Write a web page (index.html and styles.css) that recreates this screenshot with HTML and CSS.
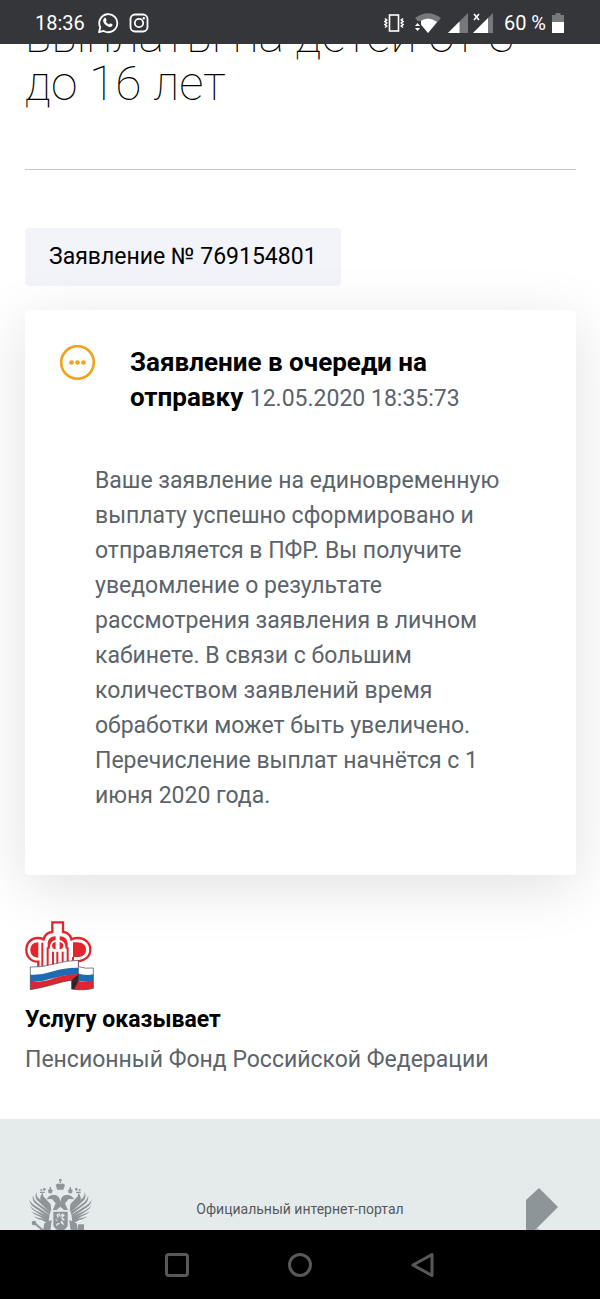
FILE: index.html
```html
<!DOCTYPE html>
<html lang="ru">
<head>
    <meta charset="utf-8">
    <meta name="viewport" content="width=device-width, initial-scale=1">
    <title>Заявление № 769154801</title>
    <link rel="stylesheet" href="styles.css">
</head>
<body>

    <header class="status-bar">
        <span class="time">18:36</span>
        <!-- whatsapp -->
        <svg class="whatsapp" width="22" height="22" viewBox="0 0 22 22">
            <path d="M2 20.200l1.300-4.900A9 9 0 1 1 6.700 18.900z" fill="none" stroke="#fff" stroke-width="1.800" stroke-linejoin="round"/>
            <path d="M7.300 6.200c.5-.5 1.300-.4 1.500.1l.8 1.900c.1.400-.6 1-.7 1.300.6 1.300 1.700 2.300 3.200 2.900.4-.2.800-1 1.200-1.100l2 1c.4.200.2 1.300-.3 1.900-.8.800-2 1-3.300.6-2.700-.9-4.600-2.700-5.500-5.200-.3-1.300.2-2.700 1.100-3.400z" fill="#fff"/>
        </svg>
        <!-- instagram -->
        <svg class="instagram" width="20" height="20" viewBox="0 0 20 20" fill="none" stroke="#fff" stroke-width="1.800">
            <rect x="1.500" y="1.500" width="17" height="17" rx="4.500"/>
            <circle cx="10" cy="10" r="4.200"/>
            <circle cx="14.800" cy="5.200" r="1.200" fill="#fff" stroke="none"/>
        </svg>
        <div class="status-right">
            <!-- vibrate -->
            <svg width="20" height="20" viewBox="0 0 20 20" fill="none" stroke="#fff" stroke-width="1.600">
                <rect x="5.500" y="2" width="9" height="16"/>
                <path d="M1 5.500l1.700 1.500L1 8.500l1.700 1.500L1 11.500 2.700 13 1 14.500M19 5.500L17.300 7 19 8.500 17.300 10l1.700 1.500-1.700 1.500 1.700 1.500"/>
            </svg>
            <!-- wifi -->
            <svg class="wifi" width="26" height="20" viewBox="0 0 26 20">
                <path d="M0 5Q13-4.500 26 5L13 20z" fill="#77787b"/>
                <path d="M4 9Q13 2 22 9L13 20z" fill="#fff"/>
                <path d="M-1 8h7v10h-7z" fill="#353639"/>
                <path d="M0 13l2.500-3L5 13zM0 15l2.500 3L5 15z" fill="#fff"/>
            </svg>
            <!-- sim 1 and sim 2 -->
            <svg class="signal" width="20" height="20" viewBox="0 0 20 20">
                <path d="M20 0v20H0z" fill="#77787b"/>
                <path d="M11.500 8.500V20H0z" fill="#fff"/>
            </svg>
            <svg class="signal-two" width="20" height="20" viewBox="0 0 20 20">
                <path d="M20 0v20H0z" fill="#77787b"/>
                <path d="M15 5v15H0z" fill="#fff"/>
                <path d="M1 1l5 6M6 1L1 7" fill="none" stroke="#fff" stroke-width="1.600"/>
            </svg>
            <span class="percent">60 %</span>
            <!-- battery -->
            <svg width="12" height="20" viewBox="0 0 12 20">
                <path d="M3.500 0h5v2H12v7H0V2h3.500z" fill="#77787b"/>
                <path d="M0 9h12v11H0z" fill="#fff"/>
            </svg>
        </div>
    </header>

    <main class="page">
        <div class="content">
            <h1>выплаты на детей от 3 до 16 лет</h1>
            <hr>
            <div class="number">Заявление № 769154801</div>

            <section class="card">
                <div class="card-head">
                    <svg class="state" width="36" height="36" viewBox="0 0 36 36">
                        <circle cx="17.500" cy="17.500" r="16.300" fill="none" stroke="#eda41c" stroke-width="2.600"/>
                        <g fill="#eda41c">
                            <circle cx="11.500" cy="17.500" r="2.300"/>
                            <circle cx="17.500" cy="17.500" r="2.300"/>
                            <circle cx="23.500" cy="17.500" r="2.300"/>
                        </g>
                    </svg>
                    <h2>Заявление в очереди на отправку <time>12.05.2020 18:35:73</time></h2>
                </div>
                <p class="message">Ваше заявление на единовременную выплату успешно сформировано и отправляется в ПФР. Вы получите уведомление о результате рассмотрения заявления в личном кабинете. В связи с большим количеством заявлений время обработки может быть увеличено. Перечисление выплат начнётся с 1 июня 2020 года.</p>
            </section>

            <section class="provider">
                <!-- pension fund logo -->
                <svg class="logo" width="72" height="72" viewBox="30 30 216 216">
                    <path d="M70 178V155C48 155 34 141 34 120S48 84 68 84Q78 84 86 88C90 74 100 67 112 66V37H144V66C156 67 166 75 169 88Q178 84 188 84C210 84 226 99 226 119S210 152 188 154V178" fill="#fff" stroke="#e3262e" stroke-width="7"/>
                    <g fill="#e3262e">
                        <path d="M70 97V143C55 143 46 134 46 120S55 97 70 97z"/>
                        <path d="M174 97H188C203 97 213 106 213 119S203 141 188 141H174z"/>
                        <path d="M122 79C107 79 98 88 98 102V116H104Q104 94 122 89zM134 79C149 79 158 88 158 102V116H152Q152 94 134 89z"/>
                        <path d="M122 96Q111 98 111 107T122 118zM134 96Q145 98 145 107T134 118z"/>
                    </g>
                    <path d="M82 98V172M98 112V170M114 125V166M127 125V164M143 125V160M158 112V158M174 141V156" stroke="#e3262e" stroke-width="6"/>
                    <path d="M188 169Q211 177 235 174V194Q210 196 188 190z" fill="#fff"/>
                    <path d="M184 189Q211 198 235 193V215Q209 218 181 211z" fill="#1d6bb3"/>
                    <path d="M179 210Q208 219 235 214V235Q206 243 170 237z" fill="#df2630"/>
                    <path d="M46 171Q79 173 117 162T190 151V174Q148 172 115 183T46 194z" fill="#fff"/>
                    <path d="M46 194Q80 196 115 184T190 173V194Q151 193 117 204T46 217z" fill="#1d6bb3"/>
                    <path d="M46 216Q81 218 117 205T190 193V211H170Q145 214 120 222T46 239z" fill="#df2630"/>
                    <path d="M190 194V213L178 237 169 238V211z" fill="#29262d"/>
                    <path d="M46 171Q79 173 117 162T190 151V210L169 211Q145 214 120 222T46 239zM191 170Q212 177 235 174V235Q206 243 170 237" fill="none" stroke="#453d45" stroke-width="2"/>
                </svg>
                <h3>Услугу оказывает</h3>
                <p>Пенсионный Фонд Российской Федерации</p>
            </section>
        </div>

        <footer class="footer">
            <!-- double-headed eagle -->
            <svg class="eagle" width="66" height="66" viewBox="39 204 198 198" fill="#8e9598">
                <path d="M132 207h8v5h-8zM134 210h4v10h-4zM122 225q6-8 14-2 8-6 14 2l-5 14h-18z"/>
                <path d="M104 231h4v6h-4zM99 240l7-4 7 4-2 10h-10zM164 231h4v6h-4zM159 240l7-4 7 4-2 10h-10z"/>
                <circle cx="79" cy="240" r="3"/><circle cx="88" cy="238" r="4"/><circle cx="184" cy="238" r="4"/><circle cx="194" cy="240" r="3"/>
                <path d="M75 245h14v4H75zM183 245h14v4h-14z"/>
                <path d="M136 275Q133 257 121 255H110Q101 257 94 268L111 267 122 280Q119 289 113 300H125L136 290 147 300H159Q153 289 150 280L161 267 178 268Q171 257 162 255H151Q139 257 136 275z"/>
                <g>
                    <path d="M65 247Q58 259 65 269L107 309 105 296 71 265Q64 260 65 247z"/>
                    <path d="M54 256Q50 269 60 280L105 315V306L67 278Q55 269 54 256z"/>
                    <path d="M43 268Q44 283 57 292L103 323V314L63 289Q47 280 43 268z"/>
                    <path d="M43 286Q49 299 63 306L102 331V320L64 302Q51 296 43 286z"/>
                    <path d="M48 304Q57 315 72 319L101 336V326L72 314Q60 312 48 304z"/>
                    <path d="M57 319Q66 329 80 330L101 341V331L79 325Q67 325 57 319z"/>
                    <path d="M83 248l2 11 22 24 2 22-33-34q-2-13 7-23z"/>
                </g>
                <g transform="matrix(-1 0 0 1 273 0)">
                    <path d="M65 247Q58 259 65 269L107 309 105 296 71 265Q64 260 65 247z"/>
                    <path d="M54 256Q50 269 60 280L105 315V306L67 278Q55 269 54 256z"/>
                    <path d="M43 268Q44 283 57 292L103 323V314L63 289Q47 280 43 268z"/>
                    <path d="M43 286Q49 299 63 306L102 331V320L64 302Q51 296 43 286z"/>
                    <path d="M48 304Q57 315 72 319L101 336V326L72 314Q60 312 48 304z"/>
                    <path d="M57 319Q66 329 80 330L101 341V331L79 325Q67 325 57 319z"/>
                    <path d="M83 248l2 11 22 24 2 22-33-34q-2-13 7-23z"/>
                </g>
                <path d="M115 305h43v42q-7 14-21 18-15-4-22-18z"/>
                <path d="M124 314l10-5 1 9 8-8 7 7-8 5 8 8-8 3 6 13-12-6-13 9 4-14-6-7 8-3z" fill="#e5ebeb"/>
                <path d="M131 313l4 8 6-4-2 11 7 3-9 3 2 8-10-4-4 5 2-12-5-4 8-2z"/>
                <path d="M88 340l22-10-4 32H84z"/>
                <path d="M185 340l-22-10 4 32h22z"/>
                <path d="M59 340L93 369" fill="none" stroke="#8e9598" stroke-width="6"/>
                <circle cx="57" cy="339" r="7"/>
                <path d="M189 343h18v22h-18z"/>
            </svg>
            <span>Официальный интернет-портал</span>
            <svg class="arrow" width="34" height="68" viewBox="0 0 34 68">
                <path d="M13 0L32 19 9 42 0 51V12z" fill="#8e9598"/>
                <path d="M11 40l21 14-19 14L0 55V51z" fill="#b5bbbd"/>
            </svg>
        </footer>
    </main>

    <nav class="nav-bar">
        <button type="button" aria-label="Недавние">
            <svg width="24" height="24" viewBox="0 0 24 24"><rect x="1.500" y="1.500" width="21" height="21" rx="2.500"/></svg>
        </button>
        <button type="button" aria-label="Домой">
            <svg width="24" height="24" viewBox="0 0 24 24"><circle cx="12" cy="12" r="10.500"/></svg>
        </button>
        <button type="button" aria-label="Назад">
            <svg width="24" height="24" viewBox="0 0 24 24"><path d="M2 12L21 1.500v21z"/></svg>
        </button>
    </nav>

</body>
</html>
```
FILE: styles.css
```css
* {
    box-sizing: border-box;
}

body {
    margin: 0;
    height: 100vh;
    display: flex;
    flex-direction: column;
    background: #fff;
    color: #000;
    font-family: Roboto, "Noto Sans", sans-serif;
    font-size: 23px;
}

h1, h2, h3, p {
    margin: 0;
}

svg {
    display: block;
    flex: none;
}

/* phone status bar */
.status-bar {
    display: flex;
    align-items: center;
    flex: none;
    height: 44px;
    padding: 2px 36px 0 35px;
    background: #353639;
    color: #fff;
    font-size: 20px;
}

.whatsapp {
    margin-left: 12px;
}

.instagram {
    margin-left: 10px;
}

.status-right {
    display: flex;
    align-items: center;
    margin-left: auto;
}

.wifi {
    margin-left: 11px;
}

.signal {
    margin-left: 7px;
}

.signal-two {
    margin-left: 5px;
}

.percent {
    margin: 0 6px 0 11px;
}

/* the page is scrolled, its top and bottom are cut off */
.page {
    flex: 1;
    min-height: 0;
    overflow: hidden;
}

.content {
    padding: 0 24px 0 25px;
}

h1 {
    margin-top: -32px;
    font-size: 48px;
    font-weight: 100;
    line-height: 48px;
}

hr {
    height: 1px;
    margin: 61px 0 58px;
    border: 0;
    background: #c8c8c8;
}

.number {
    width: fit-content;
    padding: 0 24px;
    border-radius: 4px;
    background: #f2f4fa;
    line-height: 58px;
}

.card {
    margin-top: 24px;
    padding: 35px 60px 62px 35px;
    border-radius: 4px;
    background: #fff;
    box-shadow: 0 12px 60px rgba(0, 0, 0, 0.12);
    line-height: 35px;
}

.card-head {
    display: flex;
    align-items: flex-start;
    gap: 34px;
}

h2 {
    font-size: 26px;
    font-weight: 700;
}

h2 time {
    color: #5b636b;
    font-size: 23px;
    font-weight: 400;
}

.message {
    margin: 47px 0 0 35px;
    color: #5b636b;
}

.provider {
    padding: 45px 0 39px;
}

h3 {
    margin-top: 8px;
    font-size: 23px;
    font-weight: 700;
    line-height: 40px;
}

.provider p {
    color: #5b636b;
    line-height: 40px;
}

.footer {
    display: grid;
    grid-template-columns: 1fr auto 1fr;
    align-items: start;
    padding: 59px 28px 60px;
    background: #e5ebeb;
    color: #56595b;
    font-size: 14px;
    line-height: 62px;
}

.arrow {
    justify-self: end;
    margin: 10px 12px 0 0;
}

.nav-bar {
    display: flex;
    justify-content: center;
    flex: none;
    height: 69px;
    background: #000;
}

.nav-bar button {
    display: flex;
    align-items: center;
    justify-content: center;
    width: 123px;
    padding: 0;
    border: 0;
    background: none;
}

.nav-bar svg {
    fill: none;
    stroke: #585858;
    stroke-width: 3;
    stroke-linejoin: round;
}
```
